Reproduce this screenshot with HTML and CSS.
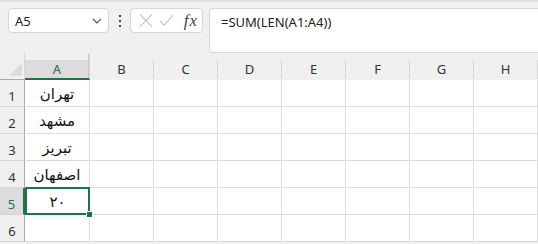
FILE: index.html
```html
<!DOCTYPE html>
<html lang="en">
<head>
  <meta charset="UTF-8">
  <title>Sheet</title>
  <link rel="stylesheet" href="styles.css">
</head>
<body>

  <!-- formula bar -->
  <div class="toolbar">
    <div class="name-box">
      <span>A5</span>
      <svg width="10" height="6" viewBox="0 0 10 6"><path d="M1 1 L5 5 L9 1" fill="none" stroke="#555" stroke-width="1.2"/></svg>
    </div>
    <div class="grip"><i></i><i></i><i></i></div>
    <div class="fx-box">
      <svg width="15" height="15" viewBox="0 0 15 15"><path d="M1 1 L14 14 M14 1 L1 14" stroke="#c4c4c4" stroke-width="1.2"/></svg>
      <svg width="16" height="13" viewBox="0 0 16 13"><path d="M1 7 L5.5 11.5 L15 1" fill="none" stroke="#c4c4c4" stroke-width="1.2"/></svg>
      <span class="fx">fx</span>
    </div>
    <div class="formula">=SUM(LEN(A1:A4))</div>
  </div>

  <!-- sheet -->
  <div class="sheet">
    <div class="corner"></div>
    <div class="col-head active">A</div>
    <div class="col-head">B</div>
    <div class="col-head">C</div>
    <div class="col-head">D</div>
    <div class="col-head">E</div>
    <div class="col-head">F</div>
    <div class="col-head">G</div>
    <div class="col-head">H</div>

    <div class="row-head">1</div>
    <div class="cell fa">تهران</div>
    <div class="cell"></div><div class="cell"></div><div class="cell"></div><div class="cell"></div><div class="cell"></div><div class="cell"></div><div class="cell"></div>

    <div class="row-head">2</div>
    <div class="cell fa">مشهد</div>
    <div class="cell"></div><div class="cell"></div><div class="cell"></div><div class="cell"></div><div class="cell"></div><div class="cell"></div><div class="cell"></div>

    <div class="row-head">3</div>
    <div class="cell fa">تبریز</div>
    <div class="cell"></div><div class="cell"></div><div class="cell"></div><div class="cell"></div><div class="cell"></div><div class="cell"></div><div class="cell"></div>

    <div class="row-head">4</div>
    <div class="cell fa">اصفهان</div>
    <div class="cell"></div><div class="cell"></div><div class="cell"></div><div class="cell"></div><div class="cell"></div><div class="cell"></div><div class="cell"></div>

    <div class="row-head active">5</div>
    <div class="cell fa selected">۲۰<span class="handle"></span></div>
    <div class="cell"></div><div class="cell"></div><div class="cell"></div><div class="cell"></div><div class="cell"></div><div class="cell"></div><div class="cell"></div>

    <div class="row-head">6</div>
    <div class="cell"></div>
    <div class="cell"></div><div class="cell"></div><div class="cell"></div><div class="cell"></div><div class="cell"></div><div class="cell"></div><div class="cell"></div>
  </div>

</body>
</html>
```

FILE: styles.css
```css
* { box-sizing: border-box; margin: 0; padding: 0; }

body {
  font-family: 'Noto Sans', 'Open Sans', sans-serif;
  background: #f0f0f0;
  border-top: 2px solid #dedede;
  overflow: hidden;
}

/* formula bar */
.toolbar {
  display: flex;
  align-items: flex-start;
  padding: 6px 0 0 8px;
  height: 52px;
}

.name-box {
  width: 101px;
  height: 25px;
  background: #fff;
  border: 1px solid #d6d6d6;
  border-radius: 4px;
  display: flex;
  align-items: center;
  justify-content: space-between;
  padding: 0 6px 0 6px;
  font-size: 13px;
  color: #222;
}

.grip {
  width: 21px;
  height: 25px;
  display: flex;
  flex-direction: column;
  align-items: center;
  justify-content: center;
  gap: 3px;
}

.grip i {
  width: 2px;
  height: 2px;
  background: #444;
}

.fx-box {
  width: 73px;
  height: 25px;
  background: #fff;
  border: 1px solid #d6d6d6;
  border-radius: 4px;
  display: flex;
  align-items: center;
  padding: 0 4px 0 8px;
  gap: 6px;
}

.fx {
  font-family: 'Liberation Serif', serif;
  font-style: italic;
  font-size: 17px;
  color: #444;
  margin-left: 4px;
  letter-spacing: 1px;
}

.formula {
  flex: 1;
  margin-left: 6px;
  height: 45px;
  background: #fff;
  border: 1px solid #d6d6d6;
  border-right: none;
  border-radius: 4px 0 0 4px;
  padding: 4px 0 0 11px;
  font-size: 13px;
  color: #222;
}

/* sheet */
.sheet {
  display: grid;
  grid-template-columns: 25px 65px repeat(7, 64px);
  grid-template-rows: 26px repeat(6, 27px);
  background: #fff;
}

.corner,
.col-head {
  background: #f0f0f0;
  border-bottom: 1px solid #ababab;
}

.corner {
  position: relative;
  border-right: 1px solid #d6d6d6;
}

.corner::after {
  content: "";
  position: absolute;
  right: 2px;
  bottom: 3px;
  border-style: solid;
  border-width: 0 0 13px 13px;
  border-color: transparent transparent #dcdcdc transparent;
}

.col-head {
  display: flex;
  align-items: center;
  justify-content: center;
  padding-top: 5px;
  font-size: 13px;
  color: #333;
  border-right: 1px solid #d6d6d6;
  border-image: linear-gradient(to bottom, transparent 6px, #d6d6d6 6px) 0 1 0 0;
  border-bottom: 1px solid #ababab;
}

.col-head.active {
  background: linear-gradient(to bottom, #f0f0f0 6px, #dcdcdc 6px);
  color: #217346;
  border-image: none;
  border-bottom: 2px solid #217346;
  box-shadow: inset -1px 0 0 #c8c8c8;
}

.row-head {
  background: #f0f0f0;
  border-right: 1px solid #ababab;
  border-bottom: 1px solid #d6d6d6;
  display: flex;
  align-items: center;
  justify-content: center;
  padding-top: 5px;
  font-size: 13px;
  color: #333;
}

.row-head.active {
  background: #dcdcdc;
  color: #217346;
  border-right: 2px solid #217346;
}

.cell {
  border-right: 1px solid #dcdcdc;
  border-bottom: 1px solid #dcdcdc;
}

.fa {
  font-family: 'DejaVu Sans', sans-serif;
  font-size: 15px;
  color: #111;
  display: flex;
  align-items: center;
  justify-content: center;
  padding-top: 2px;
}

.selected {
  position: relative;
  border: 2px solid #217346;
  margin: -1px 0 0 0;
}

.handle {
  position: absolute;
  right: -5px;
  bottom: -5px;
  width: 7px;
  height: 7px;
  background: #217346;
  border: 1px solid #fff;
}
```
